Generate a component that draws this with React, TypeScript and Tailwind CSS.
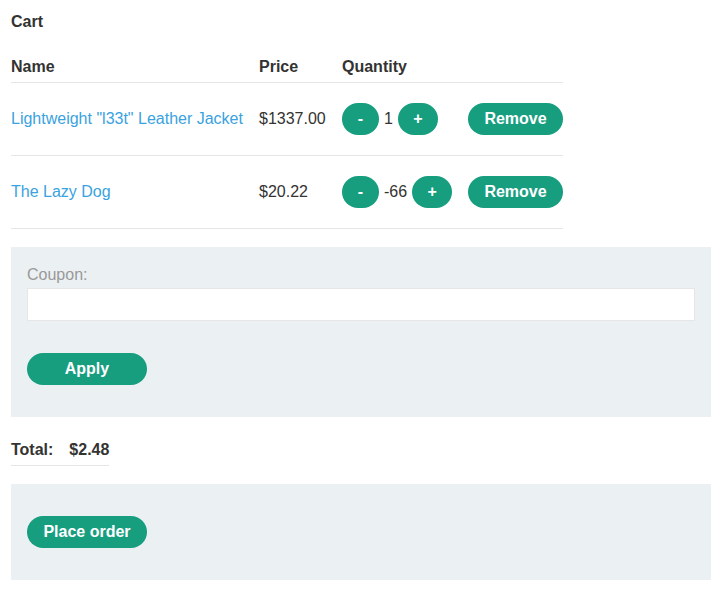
export default function App() {
  const items = [
    { name: 'Lightweight "l33t" Leather Jacket', price: "$1337.00", qty: 1 },
    { name: "The Lazy Dog", price: "$20.22", qty: -66 },
  ];

  return (
    <div className="bg-white min-h-[590px] px-[11px] text-[16px] text-[#333332] font-['Liberation_Sans',Arial,sans-serif]">
      <p className="pt-[13px] font-bold leading-[18px]">Cart</p>

      {/* Table */}
      <div className="w-[552px] mt-[19px]">
        <div className="grid grid-cols-[248px_83px_126px_95px] h-[33px] pt-[2px] items-center border-b border-[#e6e6e6] font-bold">
          <span>Name</span>
          <span>Price</span>
          <span>Quantity</span>
          <span />
        </div>
        {items.map((item, i) => (
          <div
            key={i}
            className="grid grid-cols-[248px_83px_126px_95px] h-[73px] items-center border-b border-[#e6e6e6]"
          >
            <a className="text-[#3aa2e0] cursor-pointer">{item.name}</a>
            <span>{item.price}</span>
            <div className="flex items-center">
              <button className="w-[37px] h-8 rounded-full bg-[#179e7f] text-white font-bold">-</button>
              <span className="mx-[5px]">{item.qty}</span>
              <button className="w-[40px] h-8 rounded-full bg-[#179e7f] text-white font-bold">+</button>
            </div>
            <button className="w-[95px] h-8 rounded-full bg-[#179e7f] text-white font-bold">Remove</button>
          </div>
        ))}
      </div>

      {/* Coupon */}
      <div className="w-[700px] mt-[18px] bg-[#ebf0f2] px-4 pt-[19px] pb-[32px]">
        <label className="block text-[#999] leading-[18px]">Coupon:</label>
        <input className="block w-full h-[33px] mt-[4px] bg-white border border-[#e6e6e6] outline-none" />
        <button className="mt-[32px] w-[120px] h-8 rounded-full bg-[#179e7f] text-white font-bold">Apply</button>
      </div>

      {/* Total */}
      <div className="w-[98px] mt-[24px] pb-[6px] border-b border-[#e6e6e6] flex gap-[16px] font-bold leading-[18px]">
        <span>Total:</span>
        <span>$2.48</span>
      </div>

      {/* Place order */}
      <div className="w-[700px] mt-[18px] bg-[#ebf0f2] px-4 py-8">
        <button className="w-[120px] h-8 rounded-full bg-[#179e7f] text-white font-bold">Place order</button>
      </div>
    </div>
  );
}
